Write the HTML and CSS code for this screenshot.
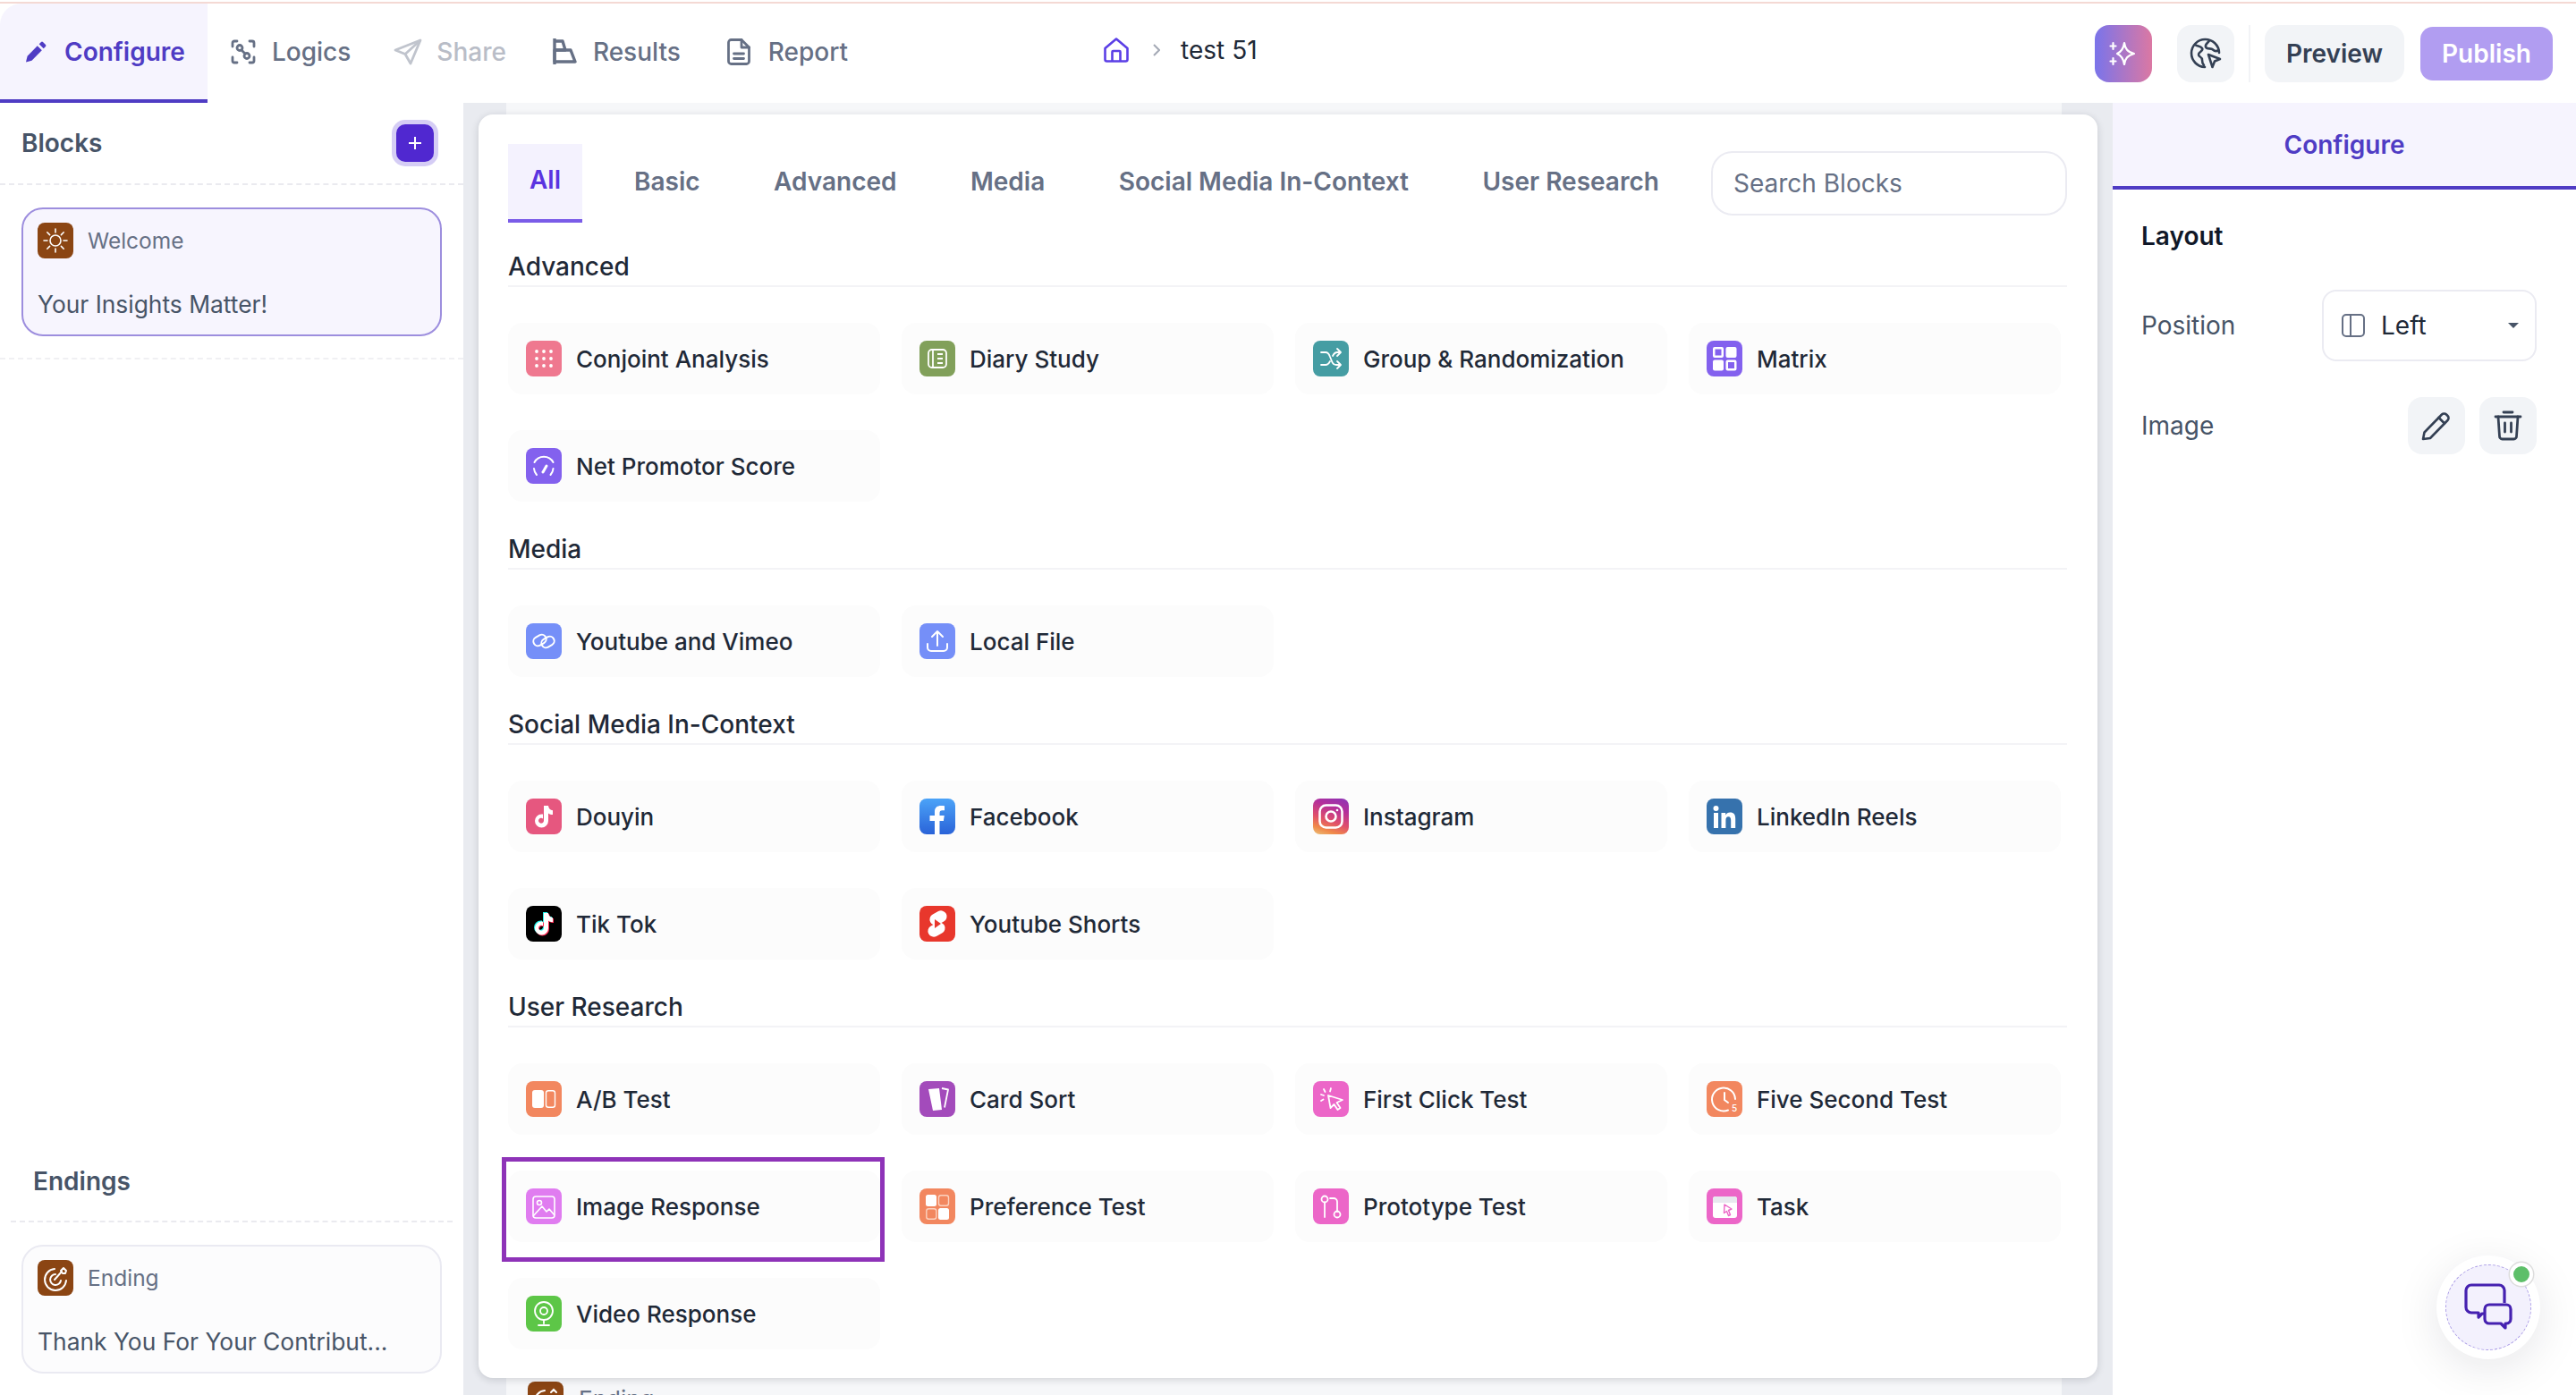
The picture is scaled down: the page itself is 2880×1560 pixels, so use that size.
FILE: index.html
```html
<!DOCTYPE html>
<html lang="en">
  <head>
    <meta charset="UTF-8" />
    <meta name="viewport" content="width=device-width, initial-scale=1.0" />
    <title>Configure</title>
    <link rel="stylesheet" href="styles.css">
  </head>
  <body>
    <div class="strip"></div>

    <!-- top bar -->
    <header class="topbar">
      <nav class="tabs">
        <a class="tab active">
          <svg width="24" height="24" viewBox="0 0 24 24" fill="#4f3cc4"><path d="M1 23.500l1.600-6.800L13.800 5.200l5 5L7.500 21.800z"/><path d="M15.700 3.300l2.300-2.300a1.500 1.500 0 0 1 2 0l3 3a1.500 1.500 0 0 1 0 2l-2.300 2.300z"/></svg>
          <span>Configure</span>
        </a>
        <a class="tab">
          <svg width="28" height="28" viewBox="0 0 28 28" fill="none" stroke="#667085" stroke-width="2.800" stroke-linecap="round" stroke-linejoin="round"><path d="M2 8V4a2 2 0 0 1 2-2h3M21 2h3a2 2 0 0 1 2 2v4M26 20v4a2 2 0 0 1-2 2h-3M7 26H4a2 2 0 0 1-2-2v-4"/><circle cx="10" cy="9.500" r="3"/><circle cx="18" cy="18.500" r="3"/><path d="M12 12l4 4"/></svg>
          <span>Logics</span>
        </a>
        <a class="tab disabled">
          <svg width="32" height="30" viewBox="0 0 32 30" fill="none" stroke="#c0c4cd" stroke-width="2.800" stroke-linejoin="round"><path d="M30 2L2 13l11 4.500L19 28z"/><path d="M30 2L13 17.500"/></svg>
          <span>Share</span>
        </a>
        <a class="tab">
          <svg width="27" height="31" viewBox="0 0 27 31" fill="none" stroke="#667085" stroke-width="3.400" stroke-linejoin="round"><path d="M2 1v29"/><path d="M2 4h9l3 10H2"/><path d="M2 14h18l5 13H2z"/></svg>
          <span>Results</span>
        </a>
        <a class="tab report">
          <svg width="26" height="30" viewBox="0 0 26 30" fill="none" stroke="#667085" stroke-width="2.800" stroke-linejoin="round" stroke-linecap="round"><path d="M16 1.500H4.500a3 3 0 0 0-3 3v21a3 3 0 0 0 3 3h17a3 3 0 0 0 3-3V10z"/><path d="M16 1.500V10h8.500"/><path d="M7.500 17h11M7.500 22.500h11"/></svg>
          <span>Report</span>
        </a>
      </nav>

      <div class="crumbs">
        <svg width="28" height="28" viewBox="0 0 28 28" fill="none" stroke="#5b3fe6" stroke-width="2.600" stroke-linejoin="round"><path d="M1.500 12L14 1.500 26.500 12v12.500a2 2 0 0 1-2 2h-21a2 2 0 0 1-2-2z"/><path d="M9.500 26.500V16a1 1 0 0 1 1-1h7a1 1 0 0 1 1 1v10.500"/></svg>
        <svg width="8" height="14" viewBox="0 0 8 14" fill="none" stroke="#a4a9b5" stroke-width="2"><path d="M1 1l6 6-6 6"/></svg>
        <span class="crumb-name">test 51</span>
      </div>

      <div class="actions">
        <button class="icon-btn magic">
          <svg width="32" height="32" viewBox="0 0 32 32" fill="none" stroke="#fff" stroke-width="2.200" stroke-linejoin="round" stroke-linecap="round"><path d="M17 4c1 6.500 3.500 10 11 12-7.500 2-10 5.500-11 12-1-6.500-3.500-10-8-12 4.500-2 7-5.500 8-12z"/><path d="M4.500 4v7M1.500 7.500h6M4.500 21v7M1.500 24.500h6"/></svg>
        </button>
        <button class="icon-btn">
          <svg width="36" height="36" viewBox="0 0 36 36" fill="none" stroke="#344054" stroke-width="2.600" stroke-linejoin="round" stroke-linecap="round"><path d="M17 33A15.500 15.500 0 1 1 33 17"/><path d="M6 8c3 2 6 1 8 4s-4 4-4 7 4 2 4 6 1 5 2 6"/><path d="M22 3.500c-2 3-5 4-4 7s6 1 8 3 4 2 6 1"/><path d="M21 19l13 5-6 2.500-2.500 6.500z"/></svg>
        </button>
        <span class="divider"></span>
        <button class="btn preview">Preview</button>
        <button class="btn publish">Publish</button>
      </div>
    </header>

    <div class="main">
      <!-- left: blocks -->
      <aside class="sidebar">
        <div class="side-head">
          <span>Blocks</span>
          <button class="add">
            <svg width="16" height="16" viewBox="0 0 16 16" fill="none" stroke="#fff" stroke-width="2"><path d="M8 1v14M1 8h14"/></svg>
          </button>
        </div>
        <div class="block current">
          <div class="block-top">
            <span class="ico brown">
              <svg width="40" height="40" viewBox="0 0 40 40" fill="none" stroke="#fff" stroke-width="1.600" stroke-linecap="round"><circle cx="20" cy="20" r="6"/><path d="M20 7v4M20 29v4M7 20h4M29 20h4M10.800 10.800l2.800 2.800M26.400 26.400l2.800 2.800M10.800 29.200l2.800-2.800M26.400 13.600l2.800-2.800"/></svg>
            </span>
            <span class="block-type">Welcome</span>
          </div>
          <div class="block-name">Your Insights Matter!</div>
        </div>
        <div class="side-sep"></div>

        <div class="endings">
          <div class="endings-head">Endings</div>
          <div class="block">
            <div class="block-top">
              <span class="ico brown">
                <svg width="40" height="40" viewBox="0 0 40 40" fill="none" stroke="#fff" stroke-width="2" stroke-linecap="round" stroke-linejoin="round"><path d="M19 10a12 12 0 1 0 13 13"/><path d="M20 16a6 6 0 1 0 6 7"/><path d="M19 22l8-9"/><path d="M26 12l3-3 3 3-1 3-3 0z"/></svg>
              </span>
              <span class="block-type">Ending</span>
            </div>
            <div class="block-name">Thank You For Your Contribut...</div>
          </div>
        </div>
      </aside>

      <!-- center: canvas with picker on top -->
      <section class="center">
        <div class="canvas">
          <div class="peek">
            <span class="ico brown">
              <svg width="40" height="40" viewBox="0 0 40 40" fill="none" stroke="#fff" stroke-width="2" stroke-linecap="round"><path d="M19 10a12 12 0 1 0 13 13"/><path d="M26 12l3-3 3 3"/></svg>
            </span>
            <span class="peek-text">Ending</span>
          </div>
        </div>

        <div class="picker">
          <div class="picker-tabs">
            <a class="ptab active">All</a>
            <a class="ptab">Basic</a>
            <a class="ptab">Advanced</a>
            <a class="ptab">Media</a>
            <a class="ptab">Social Media In-Context</a>
            <a class="ptab">User Research</a>
            <input class="search" type="text" placeholder="Search Blocks" />
          </div>

          <h2 class="group-title first">Advanced</h2>
          <div class="grid">
            <div class="item">
              <span class="ico pink">
                <svg width="40" height="40" viewBox="0 0 40 40" fill="#fff"><circle cx="12" cy="12" r="1.900"/><circle cx="20" cy="12" r="1.900"/><circle cx="28" cy="12" r="1.900"/><circle cx="12" cy="20" r="1.900"/><circle cx="20" cy="20" r="1.900"/><circle cx="28" cy="20" r="1.900"/><circle cx="12" cy="28" r="1.900"/><circle cx="20" cy="28" r="1.900"/><circle cx="28" cy="28" r="1.900"/></svg>
              </span>
              Conjoint Analysis
            </div>
            <div class="item">
              <span class="ico olive">
                <svg width="40" height="40" viewBox="0 0 40 40" fill="none" stroke="#fff" stroke-width="1.800"><rect x="10" y="10" width="20" height="20" rx="4"/><path d="M15 10v20M20 15h6M20 20h6M20 25h6"/></svg>
              </span>
              Diary Study
            </div>
            <div class="item">
              <span class="ico teal">
                <svg width="40" height="40" viewBox="0 0 40 40" fill="none" stroke="#fff" stroke-width="1.800" stroke-linecap="round" stroke-linejoin="round"><path d="M9 13h5c3 0 4 2 5 5l2 5c1 3 2 4 5 4h4"/><path d="M9 27h5c2 0 4-2 5-4M22 17c1-2 2-4 5-4h3"/><path d="M27 9l4 4-4 4M27 23l4 4-4 4"/></svg>
              </span>
              Group &amp; Randomization
            </div>
            <div class="item">
              <span class="ico violet">
                <svg width="40" height="40" viewBox="0 0 40 40" fill="#fff"><path fill-rule="evenodd" d="M9 7h8a2 2 0 0 1 2 2v8a2 2 0 0 1-2 2H9a2 2 0 0 1-2-2V9a2 2 0 0 1 2-2zm.500 2.500v7h7v-7z"/><rect x="21.500" y="7" width="12" height="12" rx="2"/><rect x="7" y="21.500" width="12" height="12" rx="2"/><path fill-rule="evenodd" d="M23.500 21.500h8a2 2 0 0 1 2 2v8a2 2 0 0 1-2 2h-8a2 2 0 0 1-2-2v-8a2 2 0 0 1 2-2zm.500 2.500v7h7v-7z"/></svg>
              </span>
              Matrix
            </div>
            <div class="item">
              <span class="ico violet">
                <svg width="40" height="40" viewBox="0 0 40 40" fill="none" stroke="#fff" stroke-width="2" stroke-linecap="round"><path d="M12 30a12 12 0 0 1-3-7M30.500 23a12 12 0 0 1-3 7"/><path d="M9.500 16a12 12 0 0 1 21 0"/><path d="M19 27l4-7" stroke-width="3"/></svg>
              </span>
              Net Promotor Score
            </div>
          </div>

          <h2 class="group-title">Media</h2>
          <div class="grid">
            <div class="item">
              <span class="ico periwinkle">
                <svg width="40" height="40" viewBox="0 0 40 40" fill="none" stroke="#fff" stroke-width="2"><rect x="8" y="14" width="15" height="10" rx="5" transform="rotate(-30 15.500 19)"/><rect x="17" y="16" width="15" height="10" rx="5" transform="rotate(-30 24.500 21)"/></svg>
              </span>
              Youtube and Vimeo
            </div>
            <div class="item">
              <span class="ico periwinkle">
                <svg width="40" height="40" viewBox="0 0 40 40" fill="none" stroke="#fff" stroke-width="2" stroke-linecap="round" stroke-linejoin="round"><path d="M20 25V10M14 15l6-6 6 6"/><path d="M9 23v4a4 4 0 0 0 4 4h14a4 4 0 0 0 4-4v-4"/></svg>
              </span>
              Local File
            </div>
          </div>

          <h2 class="group-title">Social Media In-Context</h2>
          <div class="grid">
            <div class="item">
              <span class="ico rose">
                <svg width="40" height="40" viewBox="0 0 40 40" fill="#fff"><path d="M20 8h5c.3 3 2.300 5 5 5.300v4.700c-2 0-3.700-.6-5-1.600V25a7.500 7.500 0 1 1-7.500-7.500c.5 0 1 0 1.500.1v4.800a3 3 0 1 0 1 2.600z"/></svg>
              </span>
              Douyin
            </div>
            <div class="item">
              <span class="ico facebook">
                <svg width="40" height="40" viewBox="0 0 40 40" fill="#fff"><path d="M17 40V25h-5.500v-6H17v-4.500C17 10 20 8 24 8c1.500 0 3 .1 4 .3v5h-2.500c-2.200 0-3 1-3 3V19h5.300l-.9 6H22.500v15z"/></svg>
              </span>
              Facebook
            </div>
            <div class="item">
              <span class="ico instagram">
                <svg width="40" height="40" viewBox="0 0 40 40" fill="none" stroke="#fff" stroke-width="2.600"><rect x="7.500" y="7.500" width="25" height="25" rx="7"/><circle cx="20" cy="20" r="5.500"/><circle cx="27" cy="13" r="1.300" fill="#fff" stroke="none"/></svg>
              </span>
              Instagram
            </div>
            <div class="item">
              <span class="ico linkedin">
                <svg width="40" height="40" viewBox="0 0 40 40" fill="#fff"><circle cx="10.500" cy="11" r="3"/><rect x="8" y="16" width="5" height="17"/><path d="M16.500 16h4.700v2.400c1-1.700 2.800-2.800 5-2.800 4.300 0 6 2.600 6 7V33h-5v-8.500c0-2.500-.7-4.300-2.800-4.300-2.300 0-3 1.800-3 4.300V33h-4.900z"/></svg>
              </span>
              LinkedIn Reels
            </div>
            <div class="item">
              <span class="ico tiktok">
                <svg width="40" height="40" viewBox="0 0 40 40"><path fill="#25f4ee" d="M19 7h5c.3 3 2.300 5 5 5.300V17c-2 0-3.700-.6-5-1.600V24a7.500 7.500 0 1 1-7.500-7.500c.5 0 1 0 1.500.1v4.800a3 3 0 1 0 1 2.600z"/><path fill="#fe2c55" d="M21 9h5c.3 3 2.300 5 5 5.300V19c-2 0-3.700-.6-5-1.600V26a7.500 7.500 0 1 1-7.500-7.500c.5 0 1 0 1.500.1v4.800a3 3 0 1 0 1 2.600z"/><path fill="#fff" d="M20 8h5c.3 3 2.300 5 5 5.300V18c-2 0-3.700-.6-5-1.600V25a7.500 7.500 0 1 1-7.500-7.500c.5 0 1 0 1.500.1v4.800a3 3 0 1 0 1 2.600z"/></svg>
              </span>
              Tik Tok
            </div>
            <div class="item">
              <span class="ico shorts">
                <svg width="40" height="40" viewBox="0 0 40 40"><rect x="11" y="7" width="20" height="13" rx="6.500" fill="#fff" transform="rotate(-28 21 13.500)"/><rect x="9" y="20" width="20" height="13" rx="6.500" fill="#fff" transform="rotate(-28 19 26.500)"/><path d="M17 15l7 5-7 5z" fill="#e8372c"/></svg>
              </span>
              Youtube Shorts
            </div>
          </div>

          <h2 class="group-title">User Research</h2>
          <div class="grid">
            <div class="item">
              <span class="ico coral">
                <svg width="40" height="40" viewBox="0 0 40 40"><rect x="7" y="10" width="13" height="20" rx="3" fill="#fff"/><rect x="22.500" y="10.800" width="10" height="18.400" rx="2.500" fill="none" stroke="#fff" stroke-width="1.400"/></svg>
              </span>
              A/B Test
            </div>
            <div class="item">
              <span class="ico purple">
                <svg width="40" height="40" viewBox="0 0 40 40"><path d="M10 9l12-1 3 24-10 1z" fill="#fff"/><path d="M25 8l7 1.500-4 20" fill="none" stroke="#fff" stroke-width="1.800" stroke-linejoin="round"/></svg>
              </span>
              Card Sort
            </div>
            <div class="item">
              <span class="ico magenta">
                <svg width="40" height="40" viewBox="0 0 40 40" fill="none" stroke="#fff" stroke-width="1.800" stroke-linecap="round" stroke-linejoin="round"><path d="M17 16l16 5-6.500 3 4 6-3 2-4-6-4 4z"/><path d="M12 9l1.500 3M20 8l-1 3.500M9 15l3 1M9 22l2.500-1.500"/></svg>
              </span>
              First Click Test
            </div>
            <div class="item">
              <span class="ico coral">
                <svg width="40" height="40" viewBox="0 0 40 40" fill="none" stroke="#fff" stroke-width="2" stroke-linecap="round"><path d="M24 32.500A13 13 0 1 1 32 20"/><path d="M20 13v8l4 3"/><text class="ico-digit" x="28" y="34">5</text></svg>
              </span>
              Five Second Test
            </div>
            <div class="item outlined">
              <span class="ico orchid">
                <svg width="40" height="40" viewBox="0 0 40 40" fill="none" stroke="#fff" stroke-width="1.600" stroke-linejoin="round"><rect x="8" y="9" width="24" height="24" rx="3"/><circle cx="15" cy="16" r="2.500"/><path d="M8 31l10-11 5 6 3-3 6 7"/></svg>
              </span>
              Image Response
            </div>
            <div class="item">
              <span class="ico coral">
                <svg width="40" height="40" viewBox="0 0 40 40"><rect x="7" y="7" width="12" height="13" rx="2.500" fill="#fff"/><rect x="21.500" y="7.800" width="11" height="11.500" rx="2.500" fill="none" stroke="#fbd2c0" stroke-width="1.400"/><rect x="7.800" y="22.800" width="11" height="11.500" rx="2.500" fill="none" stroke="#fbd2c0" stroke-width="1.400"/><rect x="21" y="22" width="12" height="13" rx="2.500" fill="#fff"/></svg>
              </span>
              Preference Test
            </div>
            <div class="item">
              <span class="ico magenta">
                <svg width="40" height="40" viewBox="0 0 40 40" fill="none" stroke="#fff" stroke-width="1.800" stroke-linecap="round"><circle cx="13" cy="12" r="3.500"/><path d="M13 15.500V32"/><path d="M19 11h4a4 4 0 0 1 4 4v11"/><circle cx="27" cy="29" r="3.500"/></svg>
              </span>
              Prototype Test
            </div>
            <div class="item">
              <span class="ico magenta">
                <svg width="40" height="40" viewBox="0 0 40 40"><rect x="7" y="9" width="27" height="24" rx="3" fill="#fff"/><path d="M7 16v-4a3 3 0 0 1 3-3h21a3 3 0 0 1 3 3v4z" fill="#e8e9ef"/><path d="M20 18l8 5-3.500 1.500 2 5-2 1-2-5-3 2z" fill="none" stroke="#ec66c8" stroke-width="1.400" stroke-linejoin="round"/></svg>
              </span>
              Task
            </div>
            <div class="item">
              <span class="ico green">
                <svg width="40" height="40" viewBox="0 0 40 40" fill="none" stroke="#fff" stroke-width="1.800" stroke-linecap="round"><circle cx="20" cy="17" r="10"/><circle cx="20" cy="17" r="4"/><path d="M20 27v4M14 33h12"/></svg>
              </span>
              Video Response
            </div>
          </div>
        </div>
      </section>

      <!-- right: settings -->
      <aside class="panel">
        <div class="panel-tab">Configure</div>
        <div class="panel-body">
          <h3 class="panel-title">Layout</h3>
          <div class="row position-row">
            <span class="row-label">Position</span>
            <div class="select">
              <svg width="26" height="26" viewBox="0 0 26 26" fill="none" stroke="#667085" stroke-width="2"><rect x="1" y="1" width="24" height="24" rx="4"/><path d="M10 1v24"/></svg>
              <span class="select-value">Left</span>
              <span class="caret"></span>
            </div>
          </div>
          <div class="row">
            <span class="row-label">Image</span>
            <div class="row-btns">
              <button class="icon-btn">
                <svg width="34" height="34" viewBox="0 0 34 34" fill="none" stroke="#344054" stroke-width="2.600" stroke-linejoin="round" stroke-linecap="round"><path d="M2 32l1.500-7.500L23 4.500a3.500 3.500 0 0 1 5 0l1.500 1.500a3.500 3.500 0 0 1 0 5L10 31z"/><path d="M19.500 8l6.500 6.500"/></svg>
              </button>
              <button class="icon-btn">
                <svg width="32" height="34" viewBox="0 0 32 34" fill="none" stroke="#344054" stroke-width="2.800" stroke-linejoin="round" stroke-linecap="round"><path d="M2 7h28"/><path d="M11 2h10"/><path d="M5 7l1.500 22a3 3 0 0 0 3 3h13a3 3 0 0 0 3-3L27 7"/><path d="M12.500 14v10M19.500 14v10"/></svg>
              </button>
            </div>
          </div>
        </div>
      </aside>
    </div>

    <!-- chat bubble -->
    <div class="chat">
      <div class="chat-inner">
        <svg width="54" height="54" viewBox="0 0 54 54" fill="none" stroke="#4521b0" stroke-width="3.200" stroke-linejoin="round"><path d="M22 34h-2l-4 4v-5H8a6 6 0 0 1-6-6V8a6 6 0 0 1 6-6h31a6 6 0 0 1 6 6v14"/><path d="M28 24h19a5 5 0 0 1 5 5v11a5 5 0 0 1-5 5h-1v5l-5-5H28a5 5 0 0 1-5-5V29a5 5 0 0 1 5-5z"/></svg>
      </div>
      <span class="chat-dot"></span>
    </div>
  </body>
</html>
```

FILE: styles.css
```css
* {
  box-sizing: border-box;
}

html,
body {
  height: 100%;
}

body {
  margin: 0;
  padding-top: 2px;
  overflow: hidden;
  background-color: #fff;
  font-family: Inter, "Liberation Sans", sans-serif;
  color: #1f2937;
}

button {
  font-family: inherit;
  border: none;
  cursor: pointer;
}

.strip {
  height: 2px;
  background-color: #f4d9d4;
}

/* top bar */

.topbar {
  display: flex;
  align-items: center;
  height: 111px;
  background-color: #fff;
}

.tabs {
  display: flex;
  height: 100%;
}

.tab {
  display: flex;
  align-items: center;
  gap: 18px;
  padding: 0 26px 4px;
  font-size: 28px;
  font-weight: 500;
  color: #667085;
}

.tab.active {
  gap: 20px;
  padding: 0 25px 0 28px;
  border-bottom: 4px solid #4f3cc4;
  border-top-left-radius: 24px;
  background-color: #f6f4fe;
  color: #4f3cc4;
  font-weight: 600;
}

.tab.disabled {
  gap: 16px;
  padding-left: 22px;
  color: #b9bdc7;
}

.tab.report {
  gap: 20px;
  padding-right: 24px;
}

.crumbs {
  display: flex;
  align-items: center;
  gap: 27px;
  margin-left: 262px;
  margin-top: -8px;
}

.crumb-name {
  margin-left: -4px;
  font-size: 28px;
  color: #1f2937;
}

.actions {
  display: flex;
  align-items: center;
  margin-left: auto;
  padding-right: 26px;
}

.icon-btn {
  display: flex;
  align-items: center;
  justify-content: center;
  width: 64px;
  height: 64px;
  padding: 0;
  border-radius: 16px;
  background-color: #f2f4f7;
}

.icon-btn.magic {
  margin-right: 28px;
  background: linear-gradient(90deg, #7a74ea, #db78a3);
}

.divider {
  width: 2px;
  height: 64px;
  margin: 0 16px;
  background-color: #f2f3f6;
}

.btn {
  height: 60px;
  padding: 0;
  border-radius: 14px;
  font-size: 28px;
  font-weight: 600;
}

.btn.preview {
  width: 156px;
  height: 64px;
  border-radius: 16px;
  background-color: #f2f4f7;
  color: #344054;
}

.btn.publish {
  width: 148px;
  margin-left: 18px;
  background-color: #b19df1;
  color: #fff;
}

/* layout */

.main {
  display: flex;
  height: 1445px;
}

.sidebar {
  display: flex;
  flex-direction: column;
  width: 518px;
  flex-shrink: 0;
  background-color: #fff;
}

.side-head {
  display: flex;
  align-items: center;
  justify-content: space-between;
  height: 92px;
  padding: 0 33px 0 24px;
  border-bottom: 2px dashed #eaeaef;
  font-size: 28px;
  font-weight: 600;
  color: #475467;
}

.add {
  display: flex;
  align-items: center;
  justify-content: center;
  width: 42px;
  height: 42px;
  padding: 0;
  border-radius: 10px;
  background-color: #5028d0;
  box-shadow: 0 0 0 5px #d5cdf5;
}

.block {
  width: 470px;
  height: 144px;
  margin: 0 0 0 24px;
  padding: 15px 16px 0 16px;
  border: 2px solid #eaeaf2;
  border-radius: 24px;
  background-color: #fcfcfd;
}

.block.current {
  margin-top: 25px;
  border-color: #9d8ede;
  background-color: #f7f5fe;
}

.block-top {
  display: flex;
  align-items: center;
  gap: 16px;
}

.block-type {
  font-size: 24.500px;
  color: #667085;
}

.block-name {
  margin-top: 33px;
  font-size: 26.400px;
  line-height: 36px;
  white-space: nowrap;
  color: #475467;
}

.side-sep {
  margin-top: 24px;
  border-top: 2px dashed #f0f0f3;
}

.endings {
  margin-top: auto;
  padding-bottom: 24px;
}

.endings-head {
  margin: 0 12px 25px;
  padding: 0 25px 26px;
  border-bottom: 2px dashed #eaeaef;
  font-size: 28px;
  line-height: 36px;
  font-weight: 600;
  color: #475467;
}

.center {
  position: relative;
  flex: 1;
  padding: 0 57px 0 48px;
  background-color: #e9ebf0;
}

.canvas {
  height: 100%;
  padding: 1431px 0 0 24px;
  background-color: #f6f7f9;
}

.peek {
  display: flex;
  gap: 17px;
  margin-top: -1px;
}

.peek-text {
  margin-top: 2px;
  font-size: 26px;
  line-height: 36px;
  color: #667085;
}

.picker {
  position: absolute;
  top: 13px;
  left: 17px;
  width: 1810px;
  height: 1413px;
  padding: 33px 34px 0 33px;
  border-radius: 16px;
  background-color: #fff;
  box-shadow: 0 2px 8px rgba(16, 24, 40, 0.16);
}

.picker-tabs {
  display: flex;
  align-items: flex-start;
  height: 88px;
}

.ptab {
  display: flex;
  align-items: center;
  height: 88px;
  margin-right: 82.500px;
  padding-bottom: 4px;
  font-size: 28px;
  font-weight: 600;
  white-space: nowrap;
  color: #667085;
}

.ptab:nth-child(6) {
  margin-right: 0;
}

.ptab.active {
  justify-content: center;
  width: 83px;
  margin-right: 58px;
  border-bottom: 4px solid #7a5ce8;
  background-color: #f4f2fe;
  color: #5a34e0;
}

.search {
  width: 398px;
  height: 72px;
  margin: 8px 0 0 auto;
  padding: 0 23px;
  border: 2px solid #ebebf2;
  border-radius: 24px;
  outline: none;
  font-family: inherit;
  font-size: 28px;
}

.search::placeholder {
  color: #667085;
  opacity: 1;
}

.group-title {
  margin: 35px 0 40px;
  padding-bottom: 3px;
  border-bottom: 2px solid #f3f3f6;
  font-size: 28px;
  font-weight: 500;
  line-height: 36px;
  color: #1f2937;
}

.group-title.first {
  margin-top: 31px;
}

.grid {
  display: grid;
  grid-template-columns: repeat(4, 415.500px);
  column-gap: 24.500px;
  row-gap: 40px;
}

.item {
  position: relative;
  display: flex;
  align-items: center;
  gap: 16px;
  height: 80px;
  padding-left: 20px;
  border-radius: 16px;
  background-color: #fcfcfc;
  font-size: 26px;
  font-weight: 500;
  color: #1f2937;
}

.item.outlined::after {
  content: "";
  position: absolute;
  top: -15px;
  bottom: -22px;
  left: -7px;
  right: -5px;
  border: 5px solid #8e33b8;
}

.ico {
  display: block;
  width: 40px;
  height: 40px;
  flex-shrink: 0;
  overflow: hidden;
  border-radius: 8px;
}

.ico svg {
  display: block;
}

.ico-digit {
  fill: #fff;
  stroke: none;
  font-size: 10px;
}

.brown { background-color: #8b4513; }
.pink { background-color: #ef788f; }
.olive { background-color: #81a05a; }
.teal { background-color: #459da3; }
.violet { background-color: #8361ee; }
.periwinkle { background-color: #758ff8; }
.rose { background-color: #e6577f; }
.facebook { background: linear-gradient(180deg, #4ba3f8, #2a63d8); }
.instagram { background: linear-gradient(200deg, #8a34b8 0%, #b52f9a 30%, #e0506a 60%, #f08a4a 82%, #eac27a 100%); }
.linkedin { background-color: #3672ad; }
.tiktok { background-color: #000; }
.shorts { background-color: #e8372c; }
.coral { background-color: #f2875f; }
.purple { background-color: #a34bbb; }
.magenta { background-color: #ec66c8; }
.orchid { background-color: #e07cf0; }
.green { background-color: #5dc647; }

/* right panel */

.panel {
  width: 518px;
  flex-shrink: 0;
  background-color: #fff;
}

.panel-tab {
  display: flex;
  align-items: center;
  justify-content: center;
  height: 97px;
  border-bottom: 4px solid #4f3cc4;
  background-color: #f6f4fe;
  font-size: 28px;
  font-weight: 600;
  color: #4f3cc4;
}

.panel-body {
  padding: 34px 44px 0 32px;
}

.panel-title {
  margin: 0 0 42px;
  font-size: 28px;
  line-height: 36px;
  font-weight: 600;
  color: #101828;
}

.row {
  display: flex;
  align-items: center;
  justify-content: space-between;
}

.position-row {
  margin-bottom: 40px;
}

.row-label {
  font-size: 28px;
  color: #475467;
}

.select {
  display: flex;
  align-items: center;
  width: 240px;
  height: 80px;
  padding: 0 18px 0 20px;
  border: 2px solid #ebebf2;
  border-radius: 16px;
}

.select-value {
  margin-left: 18px;
  font-size: 28px;
  color: #1f2937;
}

.caret {
  width: 0;
  height: 0;
  margin-left: auto;
  border-left: 6px solid transparent;
  border-right: 6px solid transparent;
  border-top: 6px solid #475467;
}

.row-btns {
  display: flex;
  gap: 16px;
}

/* chat bubble */

.chat {
  position: absolute;
  left: 2724px;
  top: 1404px;
  width: 116px;
  height: 116px;
  padding: 10px;
  border-radius: 50%;
  background-color: #fff;
  box-shadow: 0 10px 50px rgba(16, 24, 40, 0.1);
}

.chat-inner {
  display: flex;
  align-items: center;
  justify-content: center;
  width: 96px;
  height: 96px;
  border: 1px dashed #a99ae6;
  border-radius: 50%;
  background-color: #f3f1fd;
}

.chat-dot {
  position: absolute;
  top: 8px;
  right: 8px;
  width: 26px;
  height: 26px;
  border: 4px solid #fff;
  border-radius: 50%;
  background-color: #5dbf69;
  box-shadow: 0 0 0 1.500px #ddd;
}
```
